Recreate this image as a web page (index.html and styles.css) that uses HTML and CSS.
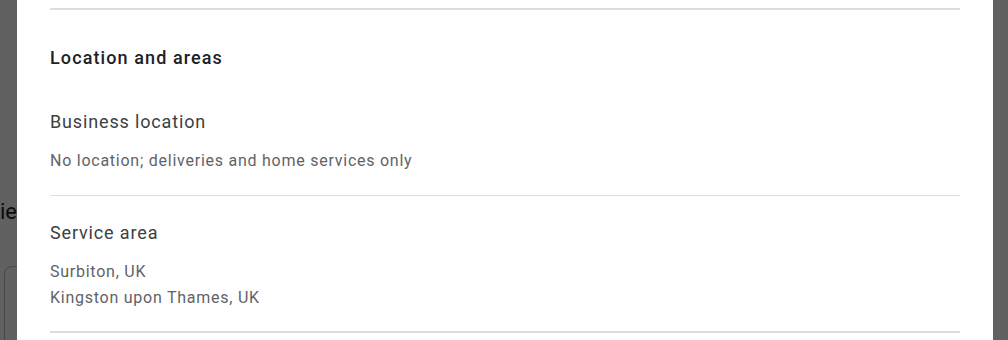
FILE: index.html
```html
<!DOCTYPE html>
<html>
<head>
<meta charset="utf-8">
<link rel="stylesheet" href="styles.css">
</head>
<body>
<div class="page">
  <div class="page-word">iews</div>
  <div class="page-card"></div>
</div>
<div class="scrim"></div>
<div class="dialog">
  <div class="section">
    <h2 class="section-title">Location and areas</h2>
    <div class="item">
      <div class="item-title">Business location</div>
      <div class="item-value">No location; deliveries and home services only</div>
    </div>
    <div class="item">
      <div class="item-title">Service area</div>
      <div class="item-value">Surbiton, UK<br>Kingston upon Thames, UK</div>
    </div>
  </div>
</div>
</body>
</html>
```
FILE: styles.css
```css
html, body {
  margin: 0;
  padding: 0;
  width: 1008px;
  height: 340px;
  overflow: hidden;
  background: #ffffff;
  font-family: Roboto, "Noto Sans", Arial, sans-serif;
}

.page {
  position: relative;
  height: 340px;
}

.page-word {
  position: absolute;
  left: 0;
  top: 198px;
  font-size: 22px;
  line-height: 28px;
  color: #202124;
}

.page-card {
  position: absolute;
  left: 4px;
  top: 266px;
  width: 300px;
  height: 200px;
  border: 1px solid #bdbdbd;
  border-radius: 8px;
}

.scrim {
  position: fixed;
  inset: 0;
  background: rgba(0, 0, 0, 0.62);
}

.dialog {
  position: fixed;
  left: 17px;
  top: -40px;
  width: 976px;
  height: 420px;
  background: #ffffff;
  box-sizing: border-box;
  padding: 48px 33px 0;
}

.section {
  border-top: 2px solid #dadce0;
  border-bottom: 2px solid #dadce0;
}

.section-title {
  margin: 36px 0 16px;
  font-size: 18px;
  line-height: 24px;
  font-weight: 500;
  letter-spacing: 1.1px;
  color: #202124;
}

.item {
  padding: 24px 0 21px;
}

.item + .item {
  border-top: 1px solid #e0e0e0;
  padding-top: 25px;
  padding-bottom: 20px;
}

.item-title {
  font-size: 18px;
  line-height: 24px;
  letter-spacing: 0.85px;
  color: #3c4043;
}

.item-value {
  margin-top: 14px;
  font-size: 16px;
  line-height: 26px;
  letter-spacing: 0.75px;
  color: #5f6368;
}
```
